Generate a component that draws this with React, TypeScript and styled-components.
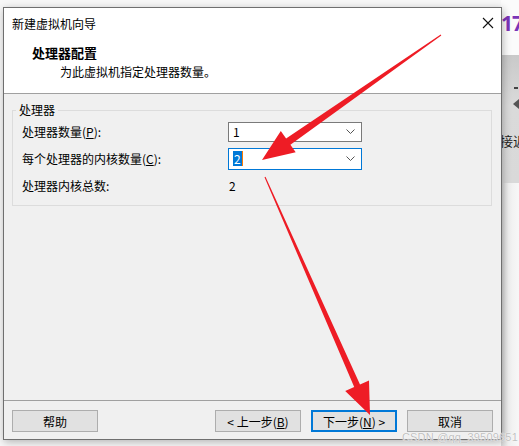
import React from "react";
import styled, { createGlobalStyle } from "styled-components";

const Global = createGlobalStyle`
  html, body { margin: 0; padding: 0; background: #f7f7f7; }
  body { font-family: "Noto Sans CJK SC", "Noto Sans", sans-serif; font-size: 12px; color: #000; }
  * { box-sizing: border-box; }
`;

const Screen = styled.div`
  position: relative;
  width: 519px;
  height: 446px;
  overflow: hidden;
  display: grid;
  grid-template-columns: 3px 499px 17px;
  background: #f7f7f7;
`;

const Behind = styled.div`
  display: flex;
  flex-direction: column;
  overflow: hidden;
  margin-left: -1px;
`;

const BehindTop = styled.div`
  height: 55px;
  background: #fbfbfb;
  padding-top: 10px;
  color: #7b35b8;
  font-family: "Noto Sans", sans-serif;
  font-weight: 700;
  font-size: 21px;
  line-height: 26px;
  letter-spacing: -1px;
  white-space: nowrap;
`;

const BehindGray = styled.div`
  height: 128px;
  background: linear-gradient(#c9c9c9, #dadada 40%, #d9d9d9);
  display: flex;
  flex-direction: column;
  align-items: flex-end;
  padding-top: 32px;
  gap: 10px;
  white-space: nowrap;
`;

const Dash = styled.div`
  width: 4px;
  height: 2px;
  background: #444;
  margin-right: 1px;
`;

const Nub = styled.div`
  width: 0;
  height: 0;
  border-top: 5px solid transparent;
  border-bottom: 5px solid transparent;
  border-right: 6px solid #555;
`;

const BehindText = styled.div`
  align-self: flex-start;
  margin-left: -1px;
  margin-top: 12px;
  font-size: 13px;
  color: #222;
`;

const BehindRest = styled.div`
  flex: 1;
  background: linear-gradient(90deg, #d4d4d4, #efefef 40%, #f7f7f7);
`;

const Dialog = styled.div`
  grid-column: 2;
  position: relative;
  z-index: 1;
  margin-top: 7px;
  height: 433px;
  border: 1px solid #6f6f6f;
  background: #f0f0f0;
  box-shadow: 1px 2px 8px rgba(0, 0, 0, 0.28);
  display: flex;
  flex-direction: column;
`;

const TitleBar = styled.div`
  height: 30px;
  background: #fff;
  display: flex;
  align-items: center;
  justify-content: space-between;
  padding: 0 7px 0 8px;
  font-size: 12px;
`;

const Header = styled.div`
  height: 56px;
  background: #fff;
  border-bottom: 1px solid #a0a0a0;
  padding: 6px 0 0 28px;
  display: flex;
  flex-direction: column;
`;

const HeadTitle = styled.div`
  font-weight: 700;
  font-size: 13px;
  line-height: 17px;
`;

const HeadSub = styled.div`
  font-size: 12px;
  line-height: 17px;
  margin-top: 2px;
  padding-left: 28px;
`;

const Body = styled.div`
  flex: 1;
  padding: 9px 9px 0 8px;
  border-bottom: 1px solid #a0a0a0;
`;

const Group = styled.fieldset`
  margin: 0;
  border: 1px solid #dcdcdc;
  padding: 4px 8px 9px 9px;
  min-width: 0;
`;

const Legend = styled.legend`
  padding: 0 3px;
  margin-left: -6px;
  font-size: 12px;
  line-height: 14px;
`;

const Rows = styled.div`
  display: grid;
  grid-template-columns: 206px 134px;
  grid-auto-rows: 21px;
  row-gap: 6px;
  align-items: center;
`;

const Label = styled.div`
  font-size: 12px;
  white-space: nowrap;
`;

const U = styled.span`
  text-decoration: underline;
  text-underline-offset: 1px;
`;

const Combo = styled.div<{ $focus?: boolean }>`
  height: ${(p) => (p.$focus ? 22 : 20)}px;
  border: 1px solid ${(p) => (p.$focus ? "#0078d7" : "#7a7a7a")};
  background: #fff;
  display: flex;
  align-items: center;
  justify-content: space-between;
  padding: 0 6px 0 4px;
  font-size: 12px;
`;

const Sel = styled.span`
  background: #0078d7;
  color: #fff;
  padding: 0 1px;
  line-height: 15px;
  border-right: 1px solid #ff7a00;
`;

const Value = styled.div`
  padding-left: 1px;
  font-size: 12px;
`;

const Footer = styled.div`
  height: 38px;
  display: flex;
  align-items: flex-start;
  padding: 9px 8px 0 8px;
  gap: 10px;
`;

const Spacer = styled.div`
  flex: 1;
`;

const Btn = styled.button<{ $primary?: boolean }>`
  width: 86px;
  height: 22px;
  background: #e1e1e1;
  border: ${(p) => (p.$primary ? "2px solid #0078d7" : "1px solid #adadad")};
  font-family: "Noto Sans CJK SC", "Noto Sans", sans-serif;
  font-size: 12px;
  color: #000;
  padding: 0;
  display: flex;
  align-items: center;
  justify-content: center;
  white-space: pre;
`;

const Overlay = styled.svg`
  position: absolute;
  left: 0;
  top: 0;
  z-index: 5;
  pointer-events: none;
`;

const Watermark = styled.div`
  position: absolute;
  right: 1px;
  bottom: 3px;
  z-index: 6;
  font-family: "Liberation Sans", sans-serif;
  font-size: 11px;
  color: rgba(170, 170, 170, 0.75);
  text-shadow: 0 0 1px #fff, 0 0 1px #fff;
  letter-spacing: 0.2px;
`;

type Pt = [number, number];

function arrowPoints(tail: Pt, tip: Pt, headLen: number, headHalf: number, shaftTail: number, shaftHead: number): string {
  const dx = tip[0] - tail[0];
  const dy = tip[1] - tail[1];
  const len = Math.hypot(dx, dy);
  const ux = dx / len;
  const uy = dy / len;
  const nx = -uy;
  const ny = ux;
  const bx = tip[0] - ux * headLen;
  const by = tip[1] - uy * headLen;
  const pts: Pt[] = [
    [tail[0] + nx * shaftTail, tail[1] + ny * shaftTail],
    [bx + nx * shaftHead, by + ny * shaftHead],
    [bx + nx * headHalf, by + ny * headHalf],
    tip,
    [bx - nx * headHalf, by - ny * headHalf],
    [bx - nx * shaftHead, by - ny * shaftHead],
    [tail[0] - nx * shaftTail, tail[1] - ny * shaftTail],
  ];
  return pts.map((p) => `${p[0].toFixed(1)},${p[1].toFixed(1)}`).join(" ");
}

const Chevron = () => (
  <svg width="9" height="5" viewBox="0 0 9 5">
    <polyline points="0.5,0.5 4.5,4.5 8.5,0.5" fill="none" stroke="#555" strokeWidth="1" />
  </svg>
);

const CloseX = () => (
  <svg width="12" height="12" viewBox="0 0 12 12">
    <path d="M1 1 L11 11 M11 1 L1 11" stroke="#111" strokeWidth="1.1" />
  </svg>
);

export default function App() {
  return (
    <>
      <Global />
      <Screen>
        <div />
        <Dialog>
          <TitleBar>
            <span>新建虚拟机向导</span>
            <CloseX />
          </TitleBar>
          <Header>
            <HeadTitle>处理器配置</HeadTitle>
            <HeadSub>为此虚拟机指定处理器数量。</HeadSub>
          </Header>
          <Body>
            <Group>
              <Legend>处理器</Legend>
              <Rows>
                <Label>
                  处理器数量(<U>P</U>):
                </Label>
                <Combo>
                  <span>1</span>
                  <Chevron />
                </Combo>
                <Label>
                  每个处理器的内核数量(<U>C</U>):
                </Label>
                <Combo $focus>
                  <Sel>2</Sel>
                  <Chevron />
                </Combo>
                <Label>处理器内核总数:</Label>
                <Value>2</Value>
              </Rows>
            </Group>
          </Body>
          <Footer>
            <Btn>帮助</Btn>
            <Spacer />
            <Btn>
              {"< 上一步("}
              <U>B</U>
              {")"}
            </Btn>
            <Btn $primary>
              {"下一步("}
              <U>N</U>
              {") >"}
            </Btn>
            <Btn>取消</Btn>
          </Footer>
        </Dialog>
        <Behind>
          <BehindTop>17</BehindTop>
          <BehindGray>
            <Dash />
            <Nub />
            <BehindText>接近</BehindText>
          </BehindGray>
          <BehindRest />
        </Behind>
        <Overlay width="519" height="446" viewBox="0 0 519 446">
          <polygon points={arrowPoints([441, 35], [262, 160], 32, 13, 0.6, 3.8)} fill="#ee1c25" />
          <polygon points={arrowPoints([265, 177], [370, 415], 32, 13, 0.6, 3.2)} fill="#ee1c25" />
        </Overlay>
        <Watermark>CSDN @qq_39509651</Watermark>
      </Screen>
    </>
  );
}
